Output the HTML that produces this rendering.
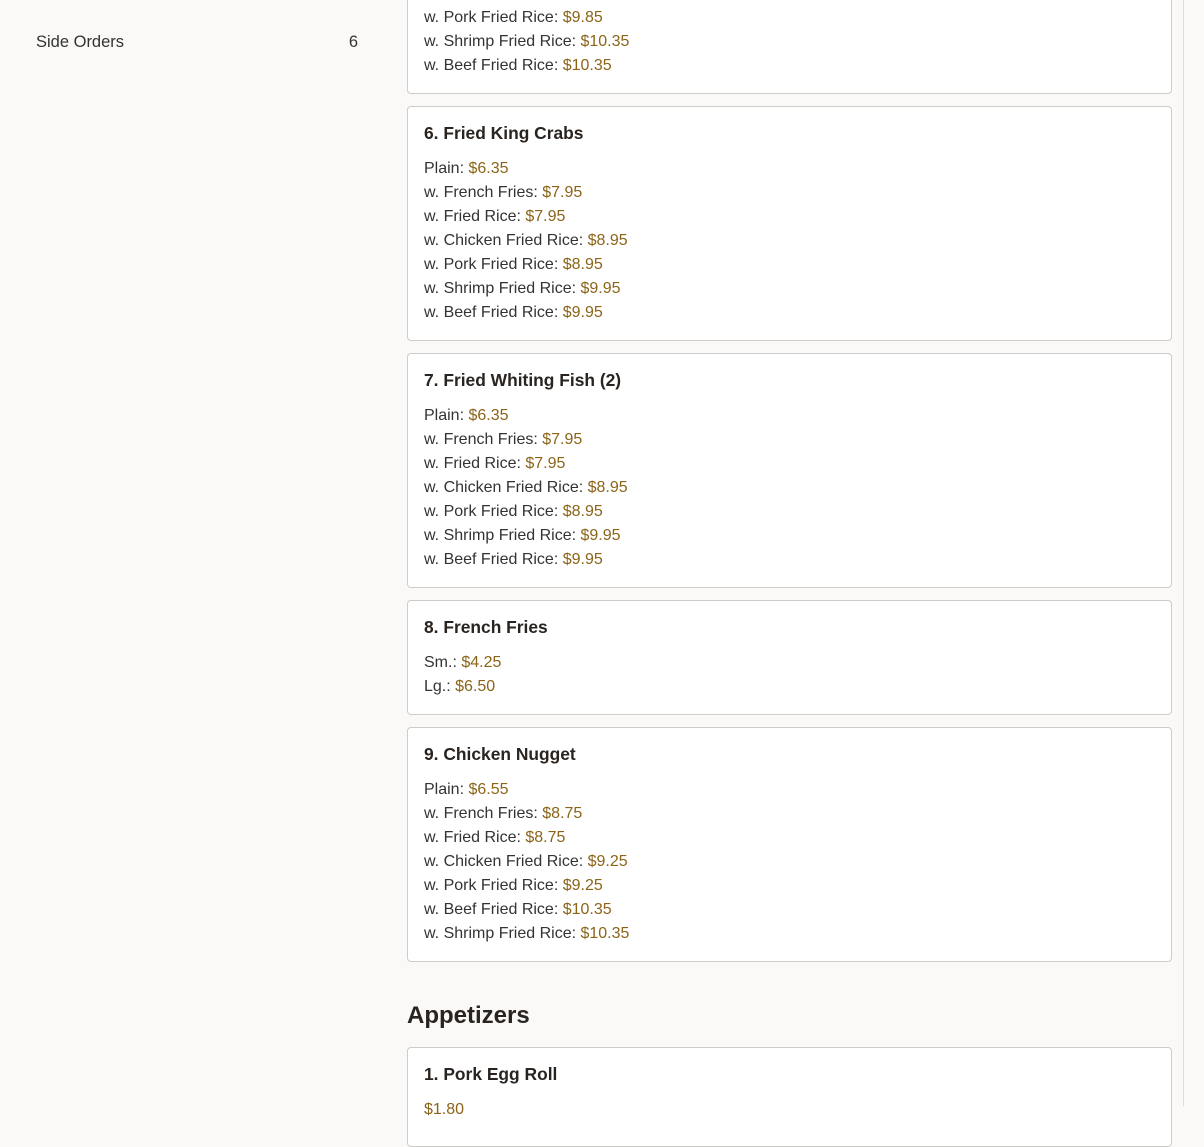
<!DOCTYPE html>
<html><head><meta charset="utf-8"><style>
*{box-sizing:border-box;margin:0;padding:0}
html,body{width:1204px;height:1106px;overflow:hidden;background:#faf9f7;font-family:"Liberation Sans",sans-serif;color:#2a2420}
.side{position:absolute;left:36px;top:30px;width:322px;font-size:16.5px;line-height:24px;display:flex;justify-content:space-between;color:#333}
.vline{position:absolute;left:1183px;top:0;width:1px;height:1106px;background:#ddd}
.card{position:absolute;left:407px;width:765px;background:#fff;border:1px solid #cfcbc6;border-radius:4px;padding:15px 16px 15px}
.card h3{font-size:17.4px;line-height:22px;font-weight:bold;margin-bottom:13px;color:#2a2420}
.card p{font-size:16px;line-height:24px;color:#333}
.card p span{color:#8b6418}
h2{position:absolute;left:407px;top:1000px;font-size:24px;line-height:32px;font-weight:bold;color:#2a2420}
</style></head><body>
<div class="side"><span>Side Orders</span><span>6</span></div>
<div class="vline"></div>
<div class="card" style="top:-40px;height:134px;padding-top:45px">
<p>w. Pork Fried Rice: <span>$9.85</span></p>
<p>w. Shrimp Fried Rice: <span>$10.35</span></p>
<p>w. Beef Fried Rice: <span>$10.35</span></p>
</div>
<div class="card" style="top:106px">
<h3>6. Fried King Crabs</h3>
<p>Plain: <span>$6.35</span></p>
<p>w. French Fries: <span>$7.95</span></p>
<p>w. Fried Rice: <span>$7.95</span></p>
<p>w. Chicken Fried Rice: <span>$8.95</span></p>
<p>w. Pork Fried Rice: <span>$8.95</span></p>
<p>w. Shrimp Fried Rice: <span>$9.95</span></p>
<p>w. Beef Fried Rice: <span>$9.95</span></p>
</div>
<div class="card" style="top:353px">
<h3>7. Fried Whiting Fish (2)</h3>
<p>Plain: <span>$6.35</span></p>
<p>w. French Fries: <span>$7.95</span></p>
<p>w. Fried Rice: <span>$7.95</span></p>
<p>w. Chicken Fried Rice: <span>$8.95</span></p>
<p>w. Pork Fried Rice: <span>$8.95</span></p>
<p>w. Shrimp Fried Rice: <span>$9.95</span></p>
<p>w. Beef Fried Rice: <span>$9.95</span></p>
</div>
<div class="card" style="top:600px">
<h3>8. French Fries</h3>
<p>Sm.: <span>$4.25</span></p>
<p>Lg.: <span>$6.50</span></p>
</div>
<div class="card" style="top:727px">
<h3>9. Chicken Nugget</h3>
<p>Plain: <span>$6.55</span></p>
<p>w. French Fries: <span>$8.75</span></p>
<p>w. Fried Rice: <span>$8.75</span></p>
<p>w. Chicken Fried Rice: <span>$9.25</span></p>
<p>w. Pork Fried Rice: <span>$9.25</span></p>
<p>w. Beef Fried Rice: <span>$10.35</span></p>
<p>w. Shrimp Fried Rice: <span>$10.35</span></p>
</div>
<h2>Appetizers</h2>
<div class="card" style="top:1047px;height:100px">
<h3>1. Pork Egg Roll</h3>
<p><span>$1.80</span></p>
</div>
</body></html>
